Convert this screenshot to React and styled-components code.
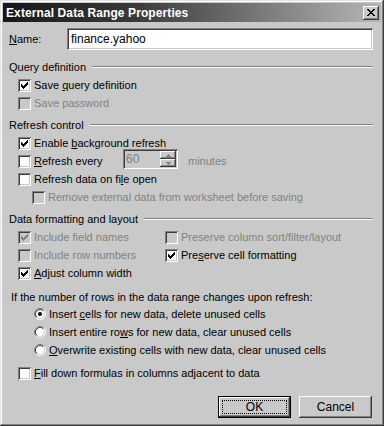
import React from "react";
import styled, { createGlobalStyle } from "styled-components";

const C = {
  face: "#c9c9c9",
  light: "#e2e2e2",
  shadow: "#808080",
  dark: "#3c3c3c",
  white: "#ffffff",
  disabled: "#828282",
};

const GlobalStyle = createGlobalStyle`
  html, body {
    margin: 0;
    padding: 0;
    background: ${C.face};
  }
  body {
    font-family: "Liberation Sans", Arial, sans-serif;
    font-size: 11px;
    color: #000;
  }
`;

const Window = styled.div`
  box-sizing: border-box;
  width: 384px;
  height: 426px;
  padding: 3px;
  display: flex;
  flex-direction: column;
  background: ${C.face};
  box-shadow: inset -1px -1px ${C.dark}, inset 1px 1px ${C.light},
    inset -2px -2px ${C.shadow}, inset 2px 2px ${C.white};
`;

const TitleBar = styled.div`
  height: 19px;
  display: flex;
  align-items: center;
  justify-content: space-between;
  padding-left: 3px;
  background: linear-gradient(to right, #161616 0%, #3a3a3a 35%, #b6b6b6 100%);
`;

const Title = styled.span`
  color: #fff;
  font-weight: bold;
  font-size: 12px;
  letter-spacing: 0.1px;
`;

const CloseButton = styled.div`
  box-sizing: border-box;
  width: 16px;
  height: 14px;
  margin-right: 2px;
  display: flex;
  align-items: center;
  justify-content: center;
  background: ${C.face};
  box-shadow: inset -1px -1px ${C.dark}, inset 1px 1px ${C.white},
    inset -2px -2px ${C.shadow};
`;

const Body = styled.div`
  display: flex;
  flex-direction: column;
  padding: 0 8px 0 6px;
`;

const NameRow = styled.div`
  display: flex;
  align-items: center;
  height: 22px;
  margin-top: 6px;
`;

const NameLabel = styled.span`
  width: 58px;
`;

const TextInput = styled.div`
  box-sizing: border-box;
  flex: 1;
  height: 22px;
  display: flex;
  align-items: center;
  padding-left: 4px;
  font-size: 12px;
  background: ${({ disabled }) => (disabled ? C.face : C.white)};
  color: ${({ disabled }) => (disabled ? C.disabled : "#000")};
  box-shadow: inset 1px 1px ${C.shadow}, inset -1px -1px ${C.white},
    inset 2px 2px ${C.dark}, inset -2px -2px ${C.face};
`;

const GroupHeader = styled.div`
  display: flex;
  align-items: center;
  height: 18px;
  margin-top: ${({ gap }) => gap}px;
`;

const GroupLine = styled.div`
  flex: 1;
  height: 0;
  margin-left: 6px;
  border-top: 1px solid ${C.shadow};
  border-bottom: 1px solid ${C.white};
`;

const Row = styled.div`
  display: flex;
  align-items: center;
  height: ${({ h }) => h || 18}px;
  padding-left: ${({ indent }) => indent || 0}px;
  margin-top: ${({ gap }) => gap || 0}px;
`;

const Grid = styled.div`
  display: grid;
  grid-template-columns: 147px 1fr;
  grid-auto-rows: 18px;
  padding-left: 9px;
`;

const Label = styled.span`
  margin-left: ${({ gap }) => (gap === undefined ? 3 : gap)}px;
  width: ${({ w }) => (w ? `${w}px` : "auto")};
  color: ${({ disabled }) => (disabled ? C.disabled : "#000")};
  white-space: nowrap;
  u {
    text-underline-offset: 1px;
  }
`;

const Box = styled.span`
  box-sizing: border-box;
  width: 13px;
  height: 13px;
  flex: none;
  display: inline-flex;
  background: ${({ disabled }) => (disabled ? C.face : C.white)};
  box-shadow: inset 1px 1px ${C.shadow}, inset -1px -1px ${C.white},
    inset 2px 2px ${C.dark}, inset -2px -2px ${C.face};
`;

const SpinBox = styled.div`
  box-sizing: border-box;
  width: 55px;
  height: 20px;
  margin-top: -4px;
  display: flex;
  align-items: stretch;
  padding: 2px;
  background: ${C.face};
  box-shadow: inset 1px 1px ${C.shadow}, inset -1px -1px ${C.white},
    inset 2px 2px ${C.dark}, inset -2px -2px ${C.face};
`;

const SpinValue = styled.span`
  flex: 1;
  display: flex;
  align-items: center;
  padding-left: 1px;
  color: ${C.disabled};
  font-size: 12px;
`;

const SpinButtons = styled.div`
  width: 16px;
  display: flex;
  flex-direction: column;
`;

const SpinHalf = styled.div`
  flex: 1;
  display: flex;
  align-items: center;
  justify-content: center;
  background: ${C.face};
  box-shadow: inset -1px -1px ${C.dark}, inset 1px 1px ${C.white},
    inset -2px -2px ${C.shadow};
`;

const Paragraph = styled.div`
  height: 17px;
  display: flex;
  align-items: center;
  padding-left: 2px;
  margin-top: 6px;
`;

const ButtonRow = styled.div`
  display: flex;
  justify-content: flex-end;
  gap: 8px;
  margin-top: 14px;
  margin-right: 1px;
`;

const Button = styled.div`
  box-sizing: border-box;
  width: 73px;
  height: 22px;
  display: flex;
  align-items: center;
  justify-content: center;
  position: relative;
  font-size: 12px;
  background: ${C.face};
  box-shadow: ${({ primary }) =>
    primary
      ? `inset 0 0 0 1px #000, inset -2px -2px ${C.dark}, inset 2px 2px ${C.white}, inset -3px -3px ${C.shadow}`
      : `inset -1px -1px ${C.dark}, inset 1px 1px ${C.white}, inset -2px -2px ${C.shadow}`};
`;

const FocusRing = styled.span`
  position: absolute;
  inset: 4px;
  border: 1px dotted #000;
`;

function Check() {
  return (
    <svg width="13" height="13" viewBox="0 0 13 13" shapeRendering="crispEdges">
      <g fill="currentColor">
        <rect x="9" y="3" width="1" height="1" />
        <rect x="8" y="4" width="2" height="1" />
        <rect x="3" y="5" width="1" height="1" />
        <rect x="7" y="5" width="3" height="1" />
        <rect x="3" y="6" width="2" height="1" />
        <rect x="6" y="6" width="3" height="1" />
        <rect x="3" y="7" width="5" height="1" />
        <rect x="4" y="8" width="3" height="1" />
        <rect x="5" y="9" width="1" height="1" />
      </g>
    </svg>
  );
}

function Checkbox({ checked, disabled }) {
  return (
    <Box disabled={disabled} style={{ color: disabled ? C.disabled : "#000" }}>
      {checked ? <Check /> : null}
    </Box>
  );
}

function Radio({ checked }) {
  return (
    <svg width="12" height="12" viewBox="0 0 12 12" style={{ flex: "none" }}>
      <circle cx="6" cy="6" r="5" fill={C.white} />
      <path d="M2.11 9.89 A5.5 5.5 0 0 1 9.89 2.11" stroke={C.shadow} fill="none" />
      <path d="M9.89 2.11 A5.5 5.5 0 0 1 2.11 9.89" stroke={C.white} fill="none" />
      <path d="M2.82 9.18 A4.5 4.5 0 0 1 9.18 2.82" stroke={C.dark} fill="none" />
      <path d="M9.18 2.82 A4.5 4.5 0 0 1 2.82 9.18" stroke={C.face} fill="none" />
      {checked ? <circle cx="6" cy="6" r="2" fill="#000" /> : null}
    </svg>
  );
}

function Option({ checked, disabled, indent, children, w }) {
  return (
    <Row indent={indent}>
      <Checkbox checked={checked} disabled={disabled} />
      <Label disabled={disabled} w={w}>
        {children}
      </Label>
    </Row>
  );
}

function RadioOption({ checked, children }) {
  return (
    <Row indent={25}>
      <Radio checked={checked} />
      <Label>{children}</Label>
    </Row>
  );
}

function Arrow({ up }) {
  return (
    <svg width="5" height="3" viewBox="0 0 5 3" shapeRendering="crispEdges">
      <path d={up ? "M2 0h1v1h1v1h1v1H0V2h1V1h1z" : "M0 0h5v1H4v1H3v1H2V2H1V1H0z"} fill={C.disabled} />
    </svg>
  );
}

export default function App() {
  return (
    <>
      <GlobalStyle />
      <Window>
        <TitleBar>
          <Title>External Data Range Properties</Title>
          <CloseButton>
            <svg width="8" height="7" viewBox="0 0 8 7" shapeRendering="crispEdges">
              <path
                d="M0 0h2v1h1v1h2V1h1V0h2v1H7v1H6v1H5v1h1v1h1v1h1v1H6V6H5V5H3v1H2v1H0V6h1V5h1V4h1V3H2V2H1V1H0z"
                fill="#000"
              />
            </svg>
          </CloseButton>
        </TitleBar>
        <Body>
          <NameRow>
            <NameLabel>
              <u>N</u>ame:
            </NameLabel>
            <TextInput>finance.yahoo</TextInput>
          </NameRow>

          <GroupHeader gap={8}>
            Query definition
            <GroupLine />
          </GroupHeader>
          <Option indent={9} checked>
            Save <u>q</u>uery definition
          </Option>
          <Option indent={9} disabled>
            Save password
          </Option>

          <GroupHeader gap={4}>
            Refresh control
            <GroupLine />
          </GroupHeader>
          <Option indent={9} checked>
            Enable <u>b</u>ackground refresh
          </Option>
          <Row indent={9}>
            <Checkbox />
            <Label w={89}>
              <u>R</u>efresh every
            </Label>
            <SpinBox>
              <SpinValue>60</SpinValue>
              <SpinButtons>
                <SpinHalf>
                  <Arrow up />
                </SpinHalf>
                <SpinHalf>
                  <Arrow />
                </SpinHalf>
              </SpinButtons>
            </SpinBox>
            <Label gap={10} disabled>
              minutes
            </Label>
          </Row>
          <Option indent={9}>
            Refresh data on fi<u>l</u>e open
          </Option>
          <Option indent={23} disabled>
            Remove external data from worksheet before saving
          </Option>

          <GroupHeader gap={4}>
            Data formatting and layout
            <GroupLine />
          </GroupHeader>
          <Grid>
            <Option checked disabled>
              Include field names
            </Option>
            <Option disabled>Preserve column sort/filter/layout</Option>
            <Option disabled>Include row numbers</Option>
            <Option checked>
              Pre<u>s</u>erve cell formatting
            </Option>
            <Option checked>
              <u>A</u>djust column width
            </Option>
          </Grid>

          <Paragraph>If the number of rows in the data range changes upon refresh:</Paragraph>
          <RadioOption checked>
            Insert <u>c</u>ells for new data, delete unused cells
          </RadioOption>
          <RadioOption>
            Insert entire ro<u>w</u>s for new data, clear unused cells
          </RadioOption>
          <RadioOption>
            <u>O</u>verwrite existing cells with new data, clear unused cells
          </RadioOption>

          <Row indent={9} gap={5}>
            <Checkbox />
            <Label>
              <u>F</u>ill down formulas in columns adjacent to data
            </Label>
          </Row>

          <ButtonRow>
            <Button primary>
              OK
              <FocusRing />
            </Button>
            <Button>Cancel</Button>
          </ButtonRow>
        </Body>
      </Window>
    </>
  );
}
